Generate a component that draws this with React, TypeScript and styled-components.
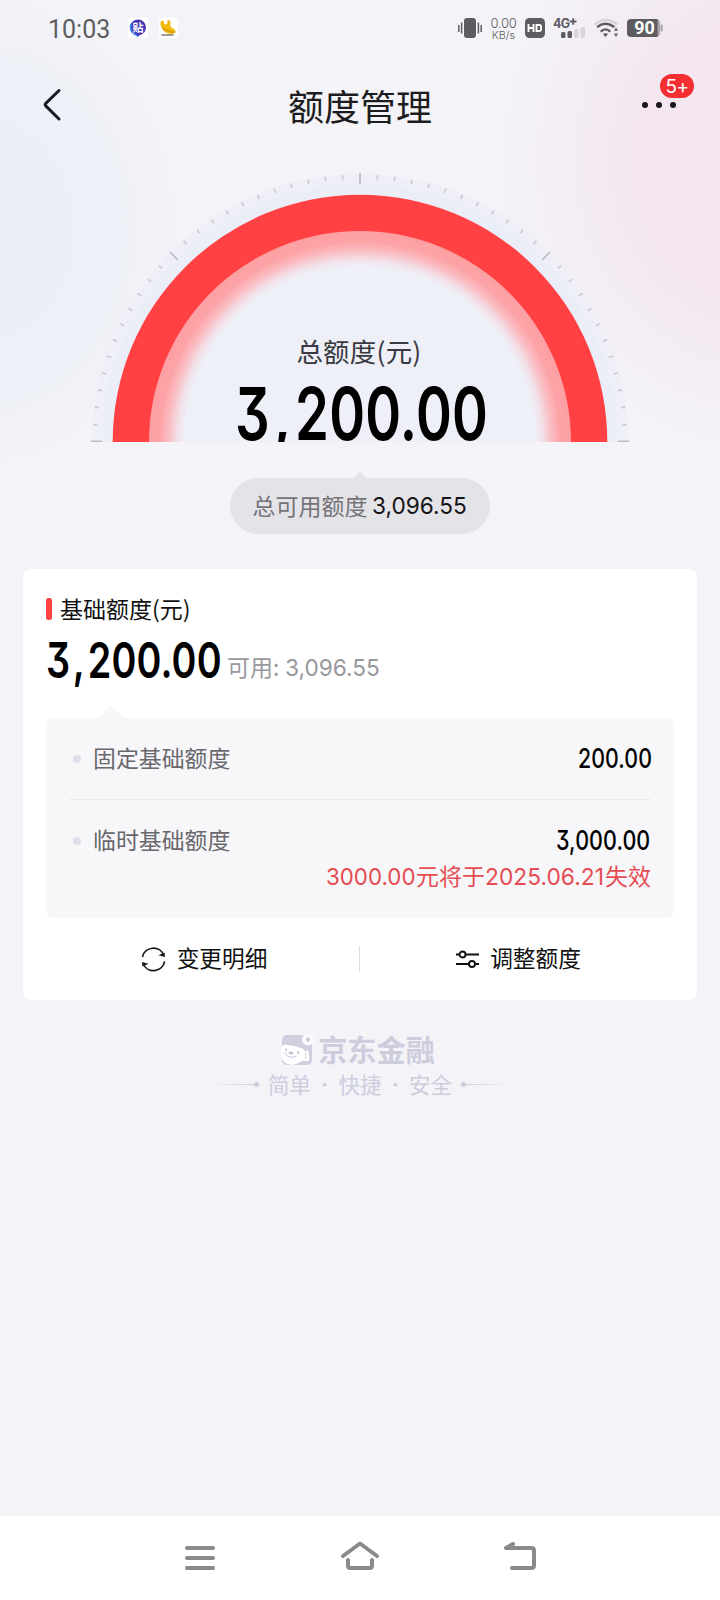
import React from 'react';
import styled, { createGlobalStyle } from 'styled-components';

const CJK = `'Noto Sans CJK SC', sans-serif`;

const GlobalStyle = createGlobalStyle`
  * { box-sizing: border-box; }
  body {
    margin: 0;
    background: #f3f3f9;
    font-family: Inter, ${CJK};
    color: #111114;
  }
`;

const Page = styled.div`
  width: 720px;
  height: 1600px;
  display: flex;
  flex-direction: column;
  overflow: hidden;
  background:
    radial-gradient(ellipse 260px 290px at 760px 160px, #f4e6ee 0%, #f4e7ef 50%, rgba(243, 236, 243, 0) 100%),
    radial-gradient(ellipse 200px 240px at -20px 230px, #e9edf6 0%, #ebeff7 45%, rgba(240, 241, 249, 0) 100%),
    #f3f3f8;
`;

const StatusBar = styled.header`
  height: 56px;
  padding: 0 57px 0 48px;
  display: flex;
  align-items: center;
  justify-content: space-between;
  color: #5d5d61;
`;

const StatusGroup = styled.div<{ $gap: number }>`
  display: flex;
  align-items: center;
  gap: ${(p) => p.$gap}px;
  height: 22px;
`;

const Clock = styled.span`
  width: 69px;
  padding-top: 3px;
  font: 400 25px/53px Roboto, sans-serif;
`;

const Speed = styled.div`
  display: flex;
  flex-direction: column;
  align-items: center;
  width: 27px;
  height: 25px;
  font: 300 13px/14px Inter, sans-serif;
  letter-spacing: -0.3px;
  white-space: nowrap;
  span + span { font-size: 10.8px; line-height: 11px; letter-spacing: 0; }
`;

const TitleBar = styled.div`
  height: 100px;
  padding: 0 44px 0 42px;
  display: grid;
  grid-template-columns: 60px 1fr 60px;
  align-items: center;
`;

const PageTitle = styled.h1`
  margin: 0;
  padding: 0 0 3px 2px;
  text-align: center;
  font: 400 36px/50px ${CJK};
  color: #1d1d20;
`;

const MoreButton = styled.div`
  position: relative;
  justify-self: end;
  height: 8px;
  display: flex;
  gap: 8px;
  margin: -1px 0 0;
`;

const Dot = styled.i`
  width: 6px;
  height: 6px;
  border-radius: 50%;
  background: #17171b;
`;

const Badge = styled.span`
  position: absolute;
  left: 18px;
  top: -28px;
  width: 34px;
  height: 24px;
  border-radius: 12px;
  background: #f52f31;
  color: #fff;
  text-align: center;
  font: 400 19px/25px Inter, sans-serif;
  letter-spacing: -0.5px;
`;

const GaugeArea = styled.section`
  display: grid;
  justify-items: center;
  height: 286px;
  overflow: hidden;
  > * { grid-area: 1 / 1; }
`;

const GaugeText = styled.div`
  z-index: 1;
  padding-top: 175px;
  display: flex;
  flex-direction: column;
  align-items: center;
`;

const GaugeLabel = styled.span`
  font: 400 26.4px/40px ${CJK};
  letter-spacing: 0.3px;
  margin-right: 2px;
  color: #39393f;
`;

const Fit = styled.span<{ $w: number }>`
  display: inline-block;
  width: ${(p) => p.$w}px;
  white-space: nowrap;
`;

const Digits = styled.span<{ $size: number; $line: number; $scale: number; $weight?: number; $color?: string }>`
  display: inline-block;
  transform: scaleX(${(p) => p.$scale});
  transform-origin: 0 50%;
  font: ${(p) => p.$weight ?? 400} ${(p) => p.$size}px/${(p) => p.$line}px Inter, sans-serif;
  color: ${(p) => p.$color ?? '#000'};
`;

const BoldDigits = styled(Digits)`
  font-feature-settings: 'cv09' 1;
  letter-spacing: 0.004em;
`;

const Comma = styled.span`
  margin: 0 0.07em;
`;

const PillWrap = styled.div`
  margin-top: 30px;
  display: flex;
  flex-direction: column;
  align-items: center;
`;

const Caret = styled.i<{ $w: number; $h: number; $color: string }>`
  width: ${(p) => p.$w}px;
  height: ${(p) => p.$h}px;
  background: ${(p) => p.$color};
  clip-path: polygon(50% 0, 100% 100%, 0 100%);
`;

const Pill = styled.div`
  width: 260px;
  height: 56px;
  border-radius: 28px;
  background: #e4e3e8;
  display: flex;
  align-items: center;
  justify-content: center;
  gap: 4px;
`;

const PillLabel = styled.span`
  padding-bottom: 2px;
  font: 400 23px/32px ${CJK};
  color: #737378;
`;

const Card = styled.section`
  margin: 35px 23px 0;
  height: 431px;
  padding: 0 23px;
  border-radius: 8px;
  background: #fff;
  display: flex;
  flex-direction: column;
`;

const CardTitle = styled.h2`
  margin: 24px 0 0;
  height: 32px;
  display: flex;
  align-items: center;
  gap: 8px;
  font: 400 23px/30px ${CJK};
  color: #111;
  span { padding-bottom: 2px; }
`;

const Marker = styled.i`
  width: 6px;
  height: 22px;
  border-radius: 2.5px;
  background: #ff4143;
`;

const AmountRow = styled.div`
  height: 81px;
  display: flex;
  align-items: flex-start;
  padding-top: 6px;
`;

const Available = styled.span`
  margin: 19px 0 0 7px;
  display: flex;
  align-items: baseline;
  gap: 6px;
  font: 400 23px/32px ${CJK};
  color: #98989d;
`;

const CaretSlot = styled.div`
  height: 12px;
  padding-left: 52px;
  display: flex;
`;

const Panel = styled.div`
  height: 200px;
  padding: 0 23px;
  border-radius: 8px;
  background: #f7f7fa;
`;

const Row = styled.div<{ $divided?: boolean }>`
  height: 82px;
  display: flex;
  align-items: center;
  justify-content: space-between;
  border-bottom: ${(p) => (p.$divided ? '1px solid #ebebef' : 'none')};
`;

const RowLabel = styled.span`
  display: flex;
  align-items: center;
  gap: 12px;
  padding-left: 4px;
  font: 400 22.9px/30px ${CJK};
  color: #68686d;
  > span { padding-bottom: 4px; }
  &::before {
    content: '';
    width: 8px;
    height: 8px;
    border-radius: 50%;
    background: #dfe0ec;
  }
`;

const Expiry = styled.div`
  margin-top: -23px;
  display: flex;
  justify-content: flex-end;
  align-items: baseline;
  font: 400 23px/32px ${CJK};
  color: #e54d52;
`;

const Actions = styled.div`
  height: 82px;
  display: grid;
  grid-template-columns: 313px 1px 1fr;
  align-items: center;
`;

const Action = styled.div`
  display: flex;
  align-items: center;
  justify-content: center;
  gap: 11px;
  padding-left: 3px;
  font: 400 22.7px/30px ${CJK};
  color: #111;
  span { padding-bottom: 2px; }
`;

const Separator = styled.i`
  height: 26px;
  background: #dcdce2;
`;

const Brand = styled.footer`
  flex: 1;
  padding-top: 33px;
  display: flex;
  flex-direction: column;
  align-items: center;
  color: #cdcddd;
`;

const BrandRow = styled.div`
  height: 34px;
  display: flex;
  align-items: center;
  gap: 5px;
  margin-right: 4px;
  font: 700 29.2px/30px ${CJK};
  span { padding-bottom: 4px; }
`;

const Tagline = styled.div`
  height: 34px;
  display: flex;
  align-items: center;
  gap: 9px;
  font: 400 21.5px/34px ${CJK};
`;

const TagWords = styled.div`
  width: 184px;
  display: flex;
  align-items: center;
  justify-content: space-between;
`;

const TagDot = styled.span`
  font-family: Inter, sans-serif;
  font-weight: 600;
`;

const TagLineRule = styled.i<{ $flip?: boolean }>`
  width: 49px;
  height: 6px;
  display: flex;
  align-items: center;
  transform: ${(p) => (p.$flip ? 'scaleX(-1)' : 'none')};
  &::before {
    content: '';
    flex: 1;
    height: 1px;
    background: linear-gradient(90deg, transparent, #cdcddd);
  }
  &::after {
    content: '';
    width: 5px;
    height: 5px;
    border-radius: 50%;
    background: #cdcddd;
  }
`;

const NavBar = styled.nav`
  height: 84px;
  background: #fff;
  display: flex;
  justify-content: center;
  gap: 120px;
  svg { margin-top: 20px; }
`;

const ticks = Array.from({ length: 49 }, (_, i) => ({ angle: i * 3.75, major: i % 12 === 0 }));

const Gauge = () => (
  <svg width="540" height="286" viewBox="90 156 540 286">
    <defs>
      <radialGradient id="glow" gradientUnits="userSpaceOnUse" cx="360" cy="442" r="212">
        <stop offset="0" stopColor="#eeeff8" />
        <stop offset="0.825" stopColor="#eef0f8" />
        <stop offset="0.86" stopColor="#f3e1e9" />
        <stop offset="0.9" stopColor="#f9bfc5" />
        <stop offset="0.945" stopColor="#fda3a7" />
        <stop offset="1" stopColor="#fd9fa2" />
      </radialGradient>
    </defs>
    <circle cx="360" cy="442" r="268" fill="#eeeff7" />
    <circle cx="360" cy="442" r="258" fill="#ebeef7" />
    {ticks.map((t) => (
      <line
        key={t.angle}
        x1={t.major ? 91 : 92.5}
        x2={t.major ? 102.3 : 97}
        y1="442"
        y2="442"
        stroke={t.major ? '#bcbcc6' : '#cbcbd4'}
        strokeWidth={t.angle % 180 === 0 ? 3 : 1.7}
        transform={`rotate(${t.angle} 360 442)`}
      />
    ))}
    <circle cx="360" cy="442" r="247.3" fill="#ff4143" />
    <circle cx="360" cy="442" r="211" fill="url(#glow)" />
  </svg>
);

const BackSvg = styled.svg`
  margin-top: -3px;
`;

const BackIcon = () => (
  <BackSvg width="20" height="34" viewBox="0 0 20 34" fill="none" stroke="#1a1a20" strokeWidth="3" strokeLinecap="round" strokeLinejoin="round">
    <path d="M17 2.500L3.500 15.600Q2.700 16.600 3.500 17.600L17 31" />
  </BackSvg>
);

const ForumIcon = () => (
  <svg width="20" height="20" viewBox="0 0 20 20">
    <rect width="20" height="20" rx="2" fill="#fff" />
    <path d="M10 1.500a8 8 0 0 1 8 8a8 8 0 0 1-6 7.500l-2 1.500l-2-1.500a8 8 0 0 1-6-7.500a8 8 0 0 1 8-8z" fill="#4537b5" />
    <path d="M3 6a8 8 0 0 0 4 10.500l3 2" stroke="#438cf2" strokeWidth="1.500" fill="none" />
    <text x="10" y="13.600" fontSize="11" fontWeight="700" textAnchor="middle" fill="#fff" fontFamily="Noto Sans CJK SC">贴</text>
  </svg>
);

const GoldIcon = () => (
  <svg width="19" height="20" viewBox="0 0 19 20">
    <rect width="19" height="20" rx="2" fill="#fff" />
    <path d="M1.500 4Q3 2 5 3.500Q4.500 6 6.500 6.500Q8.500 6.500 8.500 4.500Q7.500 2 9.500 2Q12 2.500 11.500 5.500Q10.500 8 13 10Q17 11.500 16.500 14.500Q13 17 8 15Q3.500 13 2.500 9Q1 6.500 1.500 4z" fill="#f0b90c" />
    <path d="M3 9q2.500 4 6 3.500q3.500 2.500 7 1.500" stroke="#c88b04" strokeWidth="1" fill="none" />
    <path d="M2.500 17h12" stroke="#7d7970" strokeWidth="1.500" />
  </svg>
);

const VibrateIcon = () => (
  <svg width="24" height="20" viewBox="0 0 24 20" stroke="#5d5d61" strokeWidth="1.500">
    <rect x="6" y="0" width="12" height="20" rx="3" fill="#5d5d61" stroke="none" />
    <path d="M.8 7v7M3.600 4.500v11M20.400 4.500v11M23.200 7v7" />
  </svg>
);

const HdIcon = () => (
  <svg width="20" height="20" viewBox="0 0 20 20">
    <rect width="20" height="20" rx="4.500" fill="#5d5d61" />
    <path d="M3.500 6v8M8.500 6v8M3.500 10h5M11.500 7h3q1.500 0 1.500 1.500v3q0 1.500-1.500 1.500h-3z" stroke="#fff" strokeWidth="1.900" fill="none" />
  </svg>
);

const SignalIcon = () => (
  <svg width="33" height="24" viewBox="0 -2 33 24">
    <text x="0" y="9.500" fontSize="12.500" fontWeight="700" fill="#5d5d61" fontFamily="Inter" letterSpacing="-0.800">4G</text>
    <path d="M17 3.500h6.500M20.200 .3v6.500" stroke="#5d5d61" strokeWidth="1.800" />
    <rect x="8" y="14" width="4.500" height="6" rx="1.500" fill="#5d5d61" />
    <rect x="14.500" y="13" width="4.500" height="7" rx="1.500" fill="#5d5d61" />
    <rect x="21" y="11" width="4.500" height="9" rx="1.500" fill="#dcd4dc" />
    <rect x="27.500" y="9" width="4.500" height="11" rx="1.500" fill="#dcd4dc" />
  </svg>
);

const WifiIcon = () => (
  <svg width="25" height="20" viewBox="0 0 25 20" fill="none" strokeLinecap="round">
    <path d="M1.500 6Q11.500-2 22.500 6" stroke="#d9d0d8" strokeWidth="2.500" />
    <path d="M4 8.500Q11.500 3 19.500 8.500" stroke="#5d5d61" strokeWidth="2.500" />
    <path d="M7.500 13Q11.500 9.800 15.500 13" stroke="#5d5d61" strokeWidth="2.300" />
    <path d="M9 16q2.500-1.500 5 0l-2.500 3z" fill="#5d5d61" />
    <path d="M22 9.500l2 3.300h-4zM22 19l2-3.500h-4z" fill="#5d5d61" />
  </svg>
);

const BatteryIcon = () => (
  <svg width="36" height="18" viewBox="0 0 36 18">
    <rect x="1" width="32" height="18" rx="4" fill="#aaa4aa" />
    <path d="M4 0H30.500V18H4Q0 18 0 14V4Q0 0 4 0z" fill="#5d5d61" />
    <rect x="33.500" y="5.500" width="2.200" height="7" rx="1" fill="#aaa4aa" />
    <text x="17.500" y="15.200" fontSize="18" fontWeight="700" textAnchor="middle" fill="#fff" fontFamily="Roboto">90</text>
  </svg>
);

const RefreshIcon = () => (
  <svg width="25" height="25" viewBox="0 0 25 25" fill="none" stroke="#17171a" strokeWidth="1.700">
    <path d="M1.400 10A11.300 11.300 0 0 1 22.800 8M23.600 14.500A11.300 11.300 0 0 1 2.200 17" />
    <path d="M17.500 8.200L24 10L23.500 5.500zM7.500 16.800L1 15L1.500 19.500z" fill="#17171a" stroke="none" />
  </svg>
);

const SlidersIcon = () => (
  <svg width="23" height="18" viewBox="0 0 23 18" fill="none" stroke="#111" strokeWidth="1.900">
    <path d="M0 4.500h3.500M9.500 4.500H23M0 14h13M19 14h4" />
    <circle cx="6.500" cy="4.500" r="3" />
    <circle cx="16" cy="14" r="3" />
  </svg>
);

const BrandIcon = () => (
  <svg width="32" height="32" viewBox="0 0 32 32">
    <rect x="1" y="1" width="30" height="30" rx="5" fill="#cfcfe0" />
    <path d="M0 14q2-5 7-3q8 1 13 3q4 1 4 4l3-2q2 5 1 11q-7-1-9 1q-9 6-16 0q-4-4-3-14z" fill="#fff" />
    <circle cx="27" cy="5.500" r="6" fill="#fbfbfd" />
    <path d="M27 3.500v4M25 5.500h4" stroke="#c4c4d9" strokeWidth="1.800" />
    <path d="M3.500 18q3 8 12 4" fill="none" stroke="#c4c4d9" strokeWidth="1" />
    <ellipse cx="10" cy="19" rx="2.600" ry="1.300" fill="#bcbcd2" transform="rotate(12 10 19)" />
    <path d="M5 14.500v2.500M17 17v3" stroke="#bcbcd2" strokeWidth="1.500" />
    <path d="M24.500 19v6" stroke="#cfcfe0" strokeWidth="0.800" />
  </svg>
);

const navStroke = { fill: 'none', stroke: '#8a8a8a', strokeWidth: 4, strokeLinecap: 'round', strokeLinejoin: 'round' } as const;

const MenuIcon = () => (
  <svg width="40" height="40" viewBox="180 1536 40 40" {...navStroke}>
    <path d="M187 1548h26M187 1558h26M187 1568h26" />
  </svg>
);

const HomeIcon = () => (
  <svg width="40" height="40" viewBox="340 1536 40 40" {...navStroke}>
    <path d="M343 1556L360 1543.500L377 1556" />
    <path d="M348 1560v5.500q0 2.500 2.500 2.500h19q2.500 0 2.500-2.500v-5.500" />
  </svg>
);

const ReturnIcon = () => (
  <svg width="40" height="40" viewBox="500 1536 40 40" {...navStroke}>
    <path d="M513 1544L506 1548H531.500Q534 1548 534 1550.500V1565.500Q534 1568 531.500 1568H512" />
  </svg>
);

export default function App() {
  return (
    <>
      <GlobalStyle />
      <Page>
        <StatusBar>
          <StatusGroup $gap={11}>
            <Clock>10:03</Clock>
            <ForumIcon />
            <GoldIcon />
          </StatusGroup>
          <StatusGroup $gap={8}>
            <VibrateIcon />
            <Speed>
              <span>0.00</span>
              <span>KB/s</span>
            </Speed>
            <HdIcon />
            <SignalIcon />
            <WifiIcon />
            <BatteryIcon />
          </StatusGroup>
        </StatusBar>

        <TitleBar>
          <BackIcon />
          <PageTitle>额度管理</PageTitle>
          <MoreButton>
            <Dot />
            <Dot />
            <Dot />
            <Badge>5+</Badge>
          </MoreButton>
        </TitleBar>

        <GaugeArea>
          <Gauge />
          <GaugeText>
            <GaugeLabel>总额度(元)</GaugeLabel>
            <Fit $w={251}>
              <BoldDigits $size={73} $line={86} $scale={0.745} $weight={600}>3<Comma>,</Comma>200.00</BoldDigits>
            </Fit>
          </GaugeText>
        </GaugeArea>

        <PillWrap>
          <Caret $w={14} $h={6} $color="#e4e3e8" />
          <Pill>
            <PillLabel>总可用额度</PillLabel>
            <Fit $w={96}>
              <Digits $size={23.5} $line={32} $scale={0.965} $color="#151518">3,096.55</Digits>
            </Fit>
          </Pill>
        </PillWrap>

        <Card>
          <CardTitle>
            <Marker />
            <span>基础额度(元)</span>
          </CardTitle>
          <AmountRow>
            <Fit $w={174}>
              <BoldDigits $size={50} $line={59} $scale={0.755} $weight={600}>3<Comma>,</Comma>200.00</BoldDigits>
            </Fit>
            <Available>
              可用:
              <Digits $size={23.5} $line={32} $scale={0.965} $color="#98989d">3,096.55</Digits>
            </Available>
          </AmountRow>
          <CaretSlot>
            <Caret $w={26} $h={12} $color="#f7f7fa" />
          </CaretSlot>
          <Panel>
            <Row $divided>
              <RowLabel><span>固定基础额度</span></RowLabel>
              <Fit $w={73}>
                <BoldDigits $size={27} $line={32} $scale={0.79} $weight={500}>200.00</BoldDigits>
              </Fit>
            </Row>
            <Row>
              <RowLabel><span>临时基础额度</span></RowLabel>
              <Fit $w={95}>
                <BoldDigits $size={27} $line={32} $scale={0.795} $weight={500}>3,000.00</BoldDigits>
              </Fit>
            </Row>
            <Expiry>
              <Fit $w={90}><Digits $size={23.5} $line={32} $scale={0.95} $color="#e54d52">3000.00</Digits></Fit>
              元将于
              <Fit $w={120}><Digits $size={23.5} $line={32} $scale={0.97} $color="#e54d52">2025.06.21</Digits></Fit>
              失效
            </Expiry>
          </Panel>
          <Actions>
            <Action><RefreshIcon /><span>变更明细</span></Action>
            <Separator />
            <Action><SlidersIcon /><span>调整额度</span></Action>
          </Actions>
        </Card>

        <Brand>
          <BrandRow>
            <BrandIcon />
            <span>京东金融</span>
          </BrandRow>
          <Tagline>
            <TagLineRule />
            <TagWords>
              <span>简单</span>
              <TagDot>·</TagDot>
              <span>快捷</span>
              <TagDot>·</TagDot>
              <span>安全</span>
            </TagWords>
            <TagLineRule $flip />
          </Tagline>
        </Brand>

        <NavBar>
          <MenuIcon />
          <HomeIcon />
          <ReturnIcon />
        </NavBar>
      </Page>
    </>
  );
}
